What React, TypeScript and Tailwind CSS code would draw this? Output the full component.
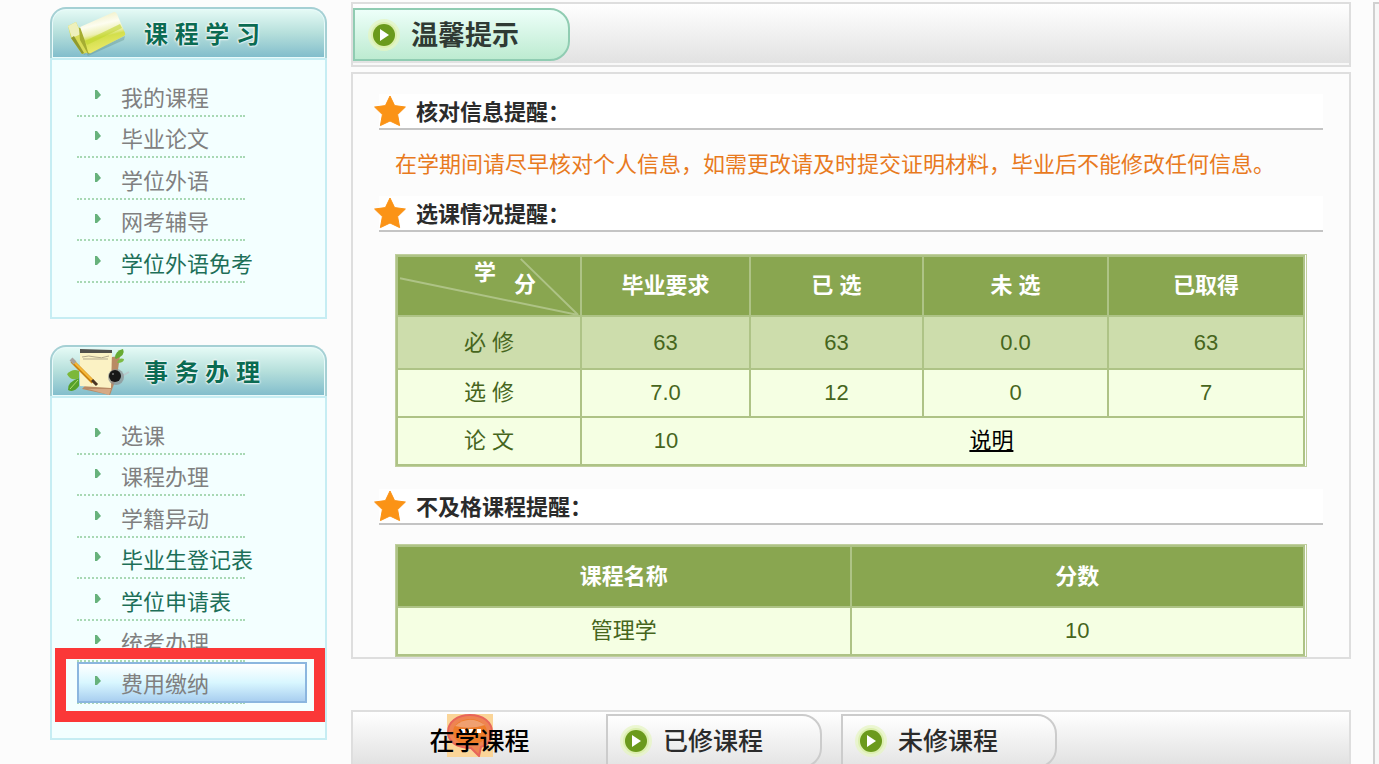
import React from 'react';

type MenuItem = { label: string; active?: boolean; current?: boolean };

const studyItems: MenuItem[] = [
  { label: '我的课程' },
  { label: '毕业论文' },
  { label: '学位外语' },
  { label: '网考辅导' },
  { label: '学位外语免考', active: true },
];

const affairItems: MenuItem[] = [
  { label: '选课' },
  { label: '课程办理' },
  { label: '学籍异动' },
  { label: '毕业生登记表', active: true },
  { label: '学位申请表', active: true },
  { label: '统考办理' },
  { label: '费用缴纳', current: true },
];

function BooksIcon() {
  return (
    <svg width="60" height="44" viewBox="0 0 60 44" aria-hidden="true">
      <defs>
        <linearGradient id="book" x1="0.35" y1="0" x2="0.6" y2="1">
          <stop offset="0" stopColor="#eeeec0" />
          <stop offset="0.3" stopColor="#fdfdf0" />
          <stop offset="0.5" stopColor="#edf0b4" />
          <stop offset="0.6" stopColor="#d3df4c" />
          <stop offset="1" stopColor="#f2ec72" />
        </linearGradient>
      </defs>
      <path d="M4 26L16 43L57 24L56 28L20 44Z" fill="#5d8a80" opacity="0.35" />
      <path d="M0 14L8 10L22 40L14 42L3 26Z" fill="#d8db57" />
      <path d="M0 14L8 10L13 22L4 26Z" fill="#eef0bb" />
      <path d="M3 26L6 24L16 41L14 42Z" fill="#8f9a2f" />
      <path d="M11 16L14 15L24 40L20 42L12 28Z" fill="#a5ad31" />
      <path d="M12 15L46 0Q48 0 49 2L57 21Q58 23 56 24L23 41Q21 42 20 40L17 29Z" fill="url(#book)" />
      <path d="M17 29L52 12L54 16L19 33Z" fill="#c2d52f" opacity="0.6" />
    </svg>
  );
}

function NotebookIcon() {
  return (
    <svg width="64" height="48" viewBox="0 0 64 48" aria-hidden="true">
      <path d="M46 9L54 8L51 28L44 47L16 41Z" fill="#b98a64" />
      <path d="M22 41L43 47L45 41Z" fill="#d6a984" />
      <path d="M1 26Q7 20 13 23L13 30Q5 34 1 26Z" fill="#7cb83a" />
      <path d="M2 42Q1 34 13 30L13 38Q8 45 2 42Z" fill="#55a02a" />
      <path d="M4 41L12 32" stroke="#b4dd6c" />
      <path d="M49 10Q49 3 57 1Q60 7 50 11Z" fill="#67ab32" />
      <path d="M51 15Q53 9 58 11Q58 15 51 15Z" fill="#7dbb45" />
      <path d="M14 3L46 3L45 40L14 38Z" fill="#fbf2c4" />
      <path d="M14 1L46 2V5L14 5Z" fill="#51504a" />
      <path d="M16 9Q23 7 29 9T43 8M17 11H42" fill="none" stroke="#b3a98c" />
      <path d="M56 28L63 24" stroke="#b9c9cc" strokeWidth="2" />
      <circle cx="50" cy="29" r="8" fill="#8a8f90" opacity="0.7" />
      <circle cx="49" cy="28" r="6" fill="#171717" />
      <circle cx="47" cy="26" r="1" fill="#777" />
      <path d="M6 13L27 34" stroke="#c98312" strokeWidth="4" />
      <path d="M8 14L27 33" stroke="#f6b93a" strokeWidth="2" />
      <path d="M5 11L9 15" stroke="#a9a29c" strokeWidth="4" />
      <path d="M26 32L31 37" stroke="#4b3423" strokeWidth="3" />
    </svg>
  );
}

function PlayIcon() {
  return (
    <svg width="34" height="34" viewBox="0 0 34 34" aria-hidden="true" className="shrink-0">
      <circle cx="17" cy="17" r="16" fill="#e6f5c0" opacity="0.7" />
      <circle cx="17" cy="17" r="13" fill="#dcefae" />
      <circle cx="17" cy="17" r="11" fill="#6b9a1c" />
      <path d="M13 11L22 17L13 23Z" fill="#fff" />
    </svg>
  );
}

function StarIcon() {
  return (
    <svg width="32" height="32" viewBox="0 0 32 32" aria-hidden="true" className="shrink-0">
      <path
        d="M16 1L20.6 10.6L31.4 12L23.6 19.6L25.6 30.6L16 26L6.4 30.6L8.4 19.6L0.6 12L11.4 10.6Z"
        fill="#fb9316"
        stroke="#fb9316"
        strokeLinejoin="round"
      />
    </svg>
  );
}

function SidePanel({ title, icon, items }: { title: string; icon: React.ReactNode; items: MenuItem[] }) {
  return (
    <section>
      <div className="flex h-[51px] items-center rounded-t-[16px] border-2 border-b-0 border-[#a5d0d4] bg-gradient-to-b from-[#e6fbf6] via-[#b5dfdb] to-[#80bccb] shadow-[inset_0_0_0_1px_#e9fafa]">
        <div className="flex w-[92px] justify-center">{icon}</div>
        <h2
          className="pt-[2px] text-[24px] leading-8 font-bold text-[#0b6b52]"
          style={{ textShadow: '0 0 2px #fff, 0 0 2px #fff, 0 0 3px #fff' }}
        >
          {title}
        </h2>
      </div>
      <div className="border-2 border-[#c6edf3] bg-[#f3ffff] pt-[15px] pb-[34px] pl-[25px]">
        <ul>
          {items.map((item) => (
            <li
              key={item.label}
              className="relative w-[168px] border-b-2 border-dotted border-[#a8d8b4] odd:h-[42px] even:h-[41px]"
            >
              <a
                href="#"
                className={
                  item.current
                    ? 'flex h-[41px] w-[230px] items-end border-2 border-[#8bb6df] bg-gradient-to-b from-white via-[#d9f7ff] to-[#a9cff0] pl-4 text-[#808080]'
                    : item.active
                      ? 'flex h-full items-end border-2 border-b-0 border-transparent pl-4 text-[#1d6f58]'
                      : 'flex h-full items-end border-2 border-b-0 border-transparent pl-4 text-[#808080]'
                }
              >
                <svg width="6" height="10" viewBox="0 0 6 10" aria-hidden="true" className="mb-[15px] shrink-0">
                  <path d="M0 0H2L6 5L2 9H0Z" fill="#67b27c" />
                </svg>
                <span className="pl-5 text-[22px] leading-8 whitespace-nowrap">{item.label}</span>
              </a>
              {item.current && (
                <div className="pointer-events-none absolute -top-[14px] -left-[22px] h-[74px] w-[270px] border-[11px] border-[#fb3838]" />
              )}
            </li>
          ))}
        </ul>
      </div>
    </section>
  );
}

function SectionTitle({ children }: { children: React.ReactNode }) {
  return (
    <div className="mr-[26px] ml-[26px] flex h-9 items-center border-b-2 border-[#c4c4c4] bg-white">
      <div className="-ml-[5px]">
        <StarIcon />
      </div>
      <h3 className="pt-1 pl-[10px] text-[22px] leading-7 font-bold text-[#2b2b2b]">{children}</h3>
    </div>
  );
}

const cell = 'border-2 border-[#aec386] text-center';

const creditRows = [
  { name: '必 修', values: ['63', '63', '0.0', '63'], style: 'h-[53px] bg-[#cdddac]' },
  { name: '选 修', values: ['7.0', '12', '0', '7'], style: 'h-12' },
];

export default function App() {
  return (
    <div className="flex min-h-screen overflow-hidden bg-[#fcfcfc] pl-[50px] font-['Liberation_Sans','Noto_Sans_CJK_SC',sans-serif]">
      <aside className="flex w-[277px] shrink-0 flex-col gap-[26px] pt-[7px]">
        <SidePanel title="课 程 学 习" icon={<BooksIcon />} items={studyItems} />
        <SidePanel title="事 务 办 理" icon={<NotebookIcon />} items={affairItems} />
      </aside>

      <main className="ml-6 min-w-0 flex-1 pt-[2px]">
        <div className="border-2 border-[#dedede] bg-gradient-to-b from-white to-[#e1e1e1] pt-1 pb-1 shadow-[inset_0_-2px_0_#f8f8f8]">
          <div className="flex h-[53px] w-[217px] items-center rounded-r-[20px] border-2 border-[#90ccb2] bg-gradient-to-b from-[#edfff9] to-[#bdebd1] pl-3">
            <PlayIcon />
            <h2 className="pt-[2px] pl-[10px] text-[27px] leading-9 font-bold text-[#2f3a34]">温馨提示</h2>
          </div>
        </div>

        <div className="mt-[5px] border-2 border-[#dedede] pt-5">
          <SectionTitle>核对信息提醒：</SectionTitle>
          <p className="px-[42px] pt-[19px] pb-[15px] text-[22px] leading-8 whitespace-nowrap text-[#e87a1e]">
            在学期间请尽早核对个人信息，如需更改请及时提交证明材料，毕业后不能修改任何信息。
          </p>
          <SectionTitle>选课情况提醒：</SectionTitle>

          <div className="mx-[42px] mt-[22px] mb-[22px] border border-[#c0cf9e] pr-px">
            <table className="w-full table-fixed border-collapse bg-[#f5ffe3] text-[22px] leading-8 text-[#46651c]">
              <colgroup>
                <col className="w-[20.3%]" />
                <col className="w-[18.6%]" />
                <col className="w-[19.1%]" />
                <col className="w-[20.4%]" />
                <col className="w-[21.6%]" />
              </colgroup>
              <thead>
                <tr className="h-[60px] bg-[#89a650] text-white">
                  <th className={`${cell} relative p-0 align-top`}>
                    <svg viewBox="0 0 184 60" preserveAspectRatio="none" aria-hidden="true" className="absolute inset-0 h-full w-full">
                      <path d="M2 22L182 60M124 2L182 60" fill="none" stroke="#aec386" strokeWidth="2" />
                    </svg>
                    <div className="relative flex justify-center gap-[18px] pl-[32px]">
                      <span>学</span>
                      <span className="pt-3">分</span>
                    </div>
                  </th>
                  <th className={cell}>毕业要求</th>
                  <th className={cell}>已 选</th>
                  <th className={cell}>未 选</th>
                  <th className={cell}>已取得</th>
                </tr>
              </thead>
              <tbody>
                {creditRows.map((row) => (
                  <tr key={row.name} className={row.style}>
                    <td className={cell}>{row.name}</td>
                    {row.values.map((value, i) => (
                      <td key={i} className={cell}>{value}</td>
                    ))}
                  </tr>
                ))}
                <tr className="h-12">
                  <td className={cell}>论 文</td>
                  <td className={`${cell} border-r-0`}>10</td>
                  <td colSpan={3} className={`${cell} border-l-0 pr-[70px]`}>
                    <a href="#" className="text-black underline">说明</a>
                  </td>
                </tr>
              </tbody>
            </table>
          </div>

          <SectionTitle>不及格课程提醒：</SectionTitle>
          <div className="mx-[42px] mt-[19px] border border-[#c0cf9e] pr-px">
            <table className="w-full table-fixed border-collapse bg-[#f5ffe3] text-[22px] leading-8 text-[#46651c]">
              <thead>
                <tr className="h-[61px] bg-[#89a650] text-white">
                  <th className={cell}>课程名称</th>
                  <th className={cell}>分数</th>
                </tr>
              </thead>
              <tbody>
                <tr className="h-12">
                  <td className={cell}>管理学</td>
                  <td className={cell}>10</td>
                </tr>
              </tbody>
            </table>
          </div>
        </div>

        <div className="mt-[51px] flex h-[54px] overflow-hidden border-2 border-b-0 border-[#dedede] bg-gradient-to-b from-white to-[#e2e2e2] pt-[2px] text-[25px] leading-9 font-medium">
          <button className="relative h-[54px] w-[253px] shrink-0 text-black">
            <svg width="46" height="43" viewBox="0 0 46 43" aria-hidden="true" className="absolute top-0 left-[94px]">
              <path d="M0 0H46V43H0Z" fill="#fbd598" />
              <path d="M23 1C36 1 45 8 45 18C45 26 40 31 34 33L32 42L24 34C10 34 1 28 1 18C1 8 10 1 23 1Z" fill="#ee8452" stroke="#e8655a" strokeWidth="2" />
              <ellipse cx="23" cy="18" rx="17" ry="13" fill="#ee7d2a" />
              <path d="M8 12Q22 0 38 11Q23 16 8 12Z" fill="#f0a070" />
              <path d="M14 17H18M22 17H26M30 17H34" stroke="#fff" strokeWidth="4" />
            </svg>
            <span className="relative">在学课程</span>
          </button>
          <button className="flex h-[54px] w-[216px] shrink-0 items-center rounded-r-[20px] border-2 border-[#cccccc] bg-gradient-to-b from-white to-[#e4e4e4] pl-[11px] text-[#2b2b2b]">
            <PlayIcon />
            <span className="pl-[10px]">已修课程</span>
          </button>
          <button className="ml-[19px] flex h-[54px] w-[216px] shrink-0 items-center rounded-r-[20px] border-2 border-[#cccccc] bg-gradient-to-b from-white to-[#e4e4e4] pl-[11px] text-[#2b2b2b]">
            <PlayIcon />
            <span className="pl-[10px]">未修课程</span>
          </button>
        </div>
      </main>

      <div className="mt-[2px] ml-[22px] w-[6px] shrink-0 border-t-2 border-l-2 border-[#d0d0d0] bg-[#f7f7f7]" />
    </div>
  );
}
